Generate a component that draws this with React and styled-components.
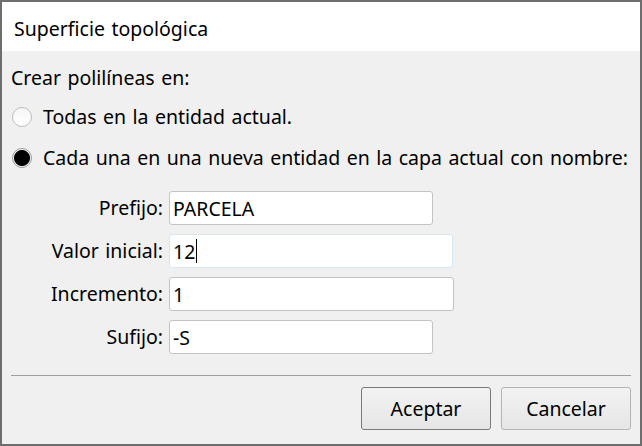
import styled, { createGlobalStyle } from 'styled-components'

const GlobalStyle = createGlobalStyle`
  * { box-sizing: border-box; }
  html, body { margin: 0; padding: 0; background: #6e6e6e; }
  body {
    font-family: 'Noto Sans', 'Open Sans', sans-serif;
    color: #000;
  }
`

const fields = [
  { label: 'Prefijo:', value: 'PARCELA', width: 264 },
  { label: 'Valor inicial:', value: '12', width: 284, focused: true },
  { label: 'Incremento:', value: '1', width: 285 },
  { label: 'Sufijo:', value: '-S', width: 264 },
]

const App = () => {
  return (
    <>
      <GlobalStyle />
      <Window>
        <TitleBar>Superficie topológica</TitleBar>
        <Body>
          <Heading>Crear polilíneas en:</Heading>
          <RadioRow>
            <Radio />
            <span>Todas en la entidad actual.</span>
          </RadioRow>
          <RadioRow>
            <Radio checked />
            <span>Cada una en una nueva entidad en la capa actual con nombre:</span>
          </RadioRow>

          <Fields>
            {fields.map((f) => (
              <FieldRow key={f.label}>
                <Label>{f.label}</Label>
                <Field $width={f.width} $focused={f.focused}>
                  {f.value}
                  {f.focused && <Caret />}
                </Field>
              </FieldRow>
            ))}
          </Fields>

          <Separator />

          <Buttons>
            <Button $default>Aceptar</Button>
            <Button>Cancelar</Button>
          </Buttons>
        </Body>
      </Window>
    </>
  )
}

export default App

const Window = styled.div`
  width: 642px;
  height: 446px;
  border: 2px solid #6e6e6e;
  background: #f0f0f0;
  display: flex;
  flex-direction: column;
  font-size: 19.5px;
  word-spacing: 1.4px;
`

const TitleBar = styled.div`
  height: 49px;
  background: #fff;
  display: flex;
  align-items: center;
  padding-left: 12px;
  padding-top: 3px;
`

const Body = styled.div`
  flex: 1;
  display: flex;
  flex-direction: column;
  padding: 15px 9px 13px 9px;
`

const Heading = styled.div`
  line-height: 24px;
  margin-bottom: 6px;
`

const RadioRow = styled.div`
  height: 41px;
  display: flex;
  align-items: center;
  gap: 11px;
  padding-left: 1px;
  line-height: 24px;
`

const Radio = styled.span`
  width: 20px;
  height: 20px;
  border-radius: 50%;
  flex: none;
  border: 1px solid ${(p) => (p.checked ? '#9a9a9a' : '#bdbdbd')};
  background: ${(p) =>
    p.checked
      ? 'radial-gradient(circle, #000 0 7.5px, #f4f4f4 8.5px)'
      : 'linear-gradient(#f6f6f6, #ffffff)'};
`

const Fields = styled.div`
  display: flex;
  flex-direction: column;
  gap: 9px;
  margin-top: 13px;
`

const FieldRow = styled.div`
  display: flex;
  align-items: center;
  gap: 6px;
`

const Label = styled.div`
  width: 152px;
  text-align: right;
  line-height: 24px;
`

const Field = styled.div`
  width: ${(p) => p.$width}px;
  height: 34px;
  background: #fff;
  border: 1px solid ${(p) => (p.$focused ? '#d5e6f6' : '#c3c3c3')};
  border-radius: 3px;
  display: flex;
  align-items: center;
  padding-left: 3px;
`

const Caret = styled.span`
  width: 1px;
  height: 24px;
  background: #000;
  margin-left: 1px;
`

const Separator = styled.div`
  height: 1px;
  background: #a0a0a0;
  margin-top: 21px;
`

const Buttons = styled.div`
  display: flex;
  justify-content: flex-end;
  gap: 10px;
  margin-top: 11px;
`

const Button = styled.button`
  width: 130px;
  height: 43px;
  font: inherit;
  word-spacing: inherit;
  color: #000;
  border: 1px solid ${(p) => (p.$default ? '#7a7a7a' : '#b4b4b4')};
  border-radius: 3px;
  background: linear-gradient(#f2f2f2, #e6e6e6);
  padding: 0;
`
